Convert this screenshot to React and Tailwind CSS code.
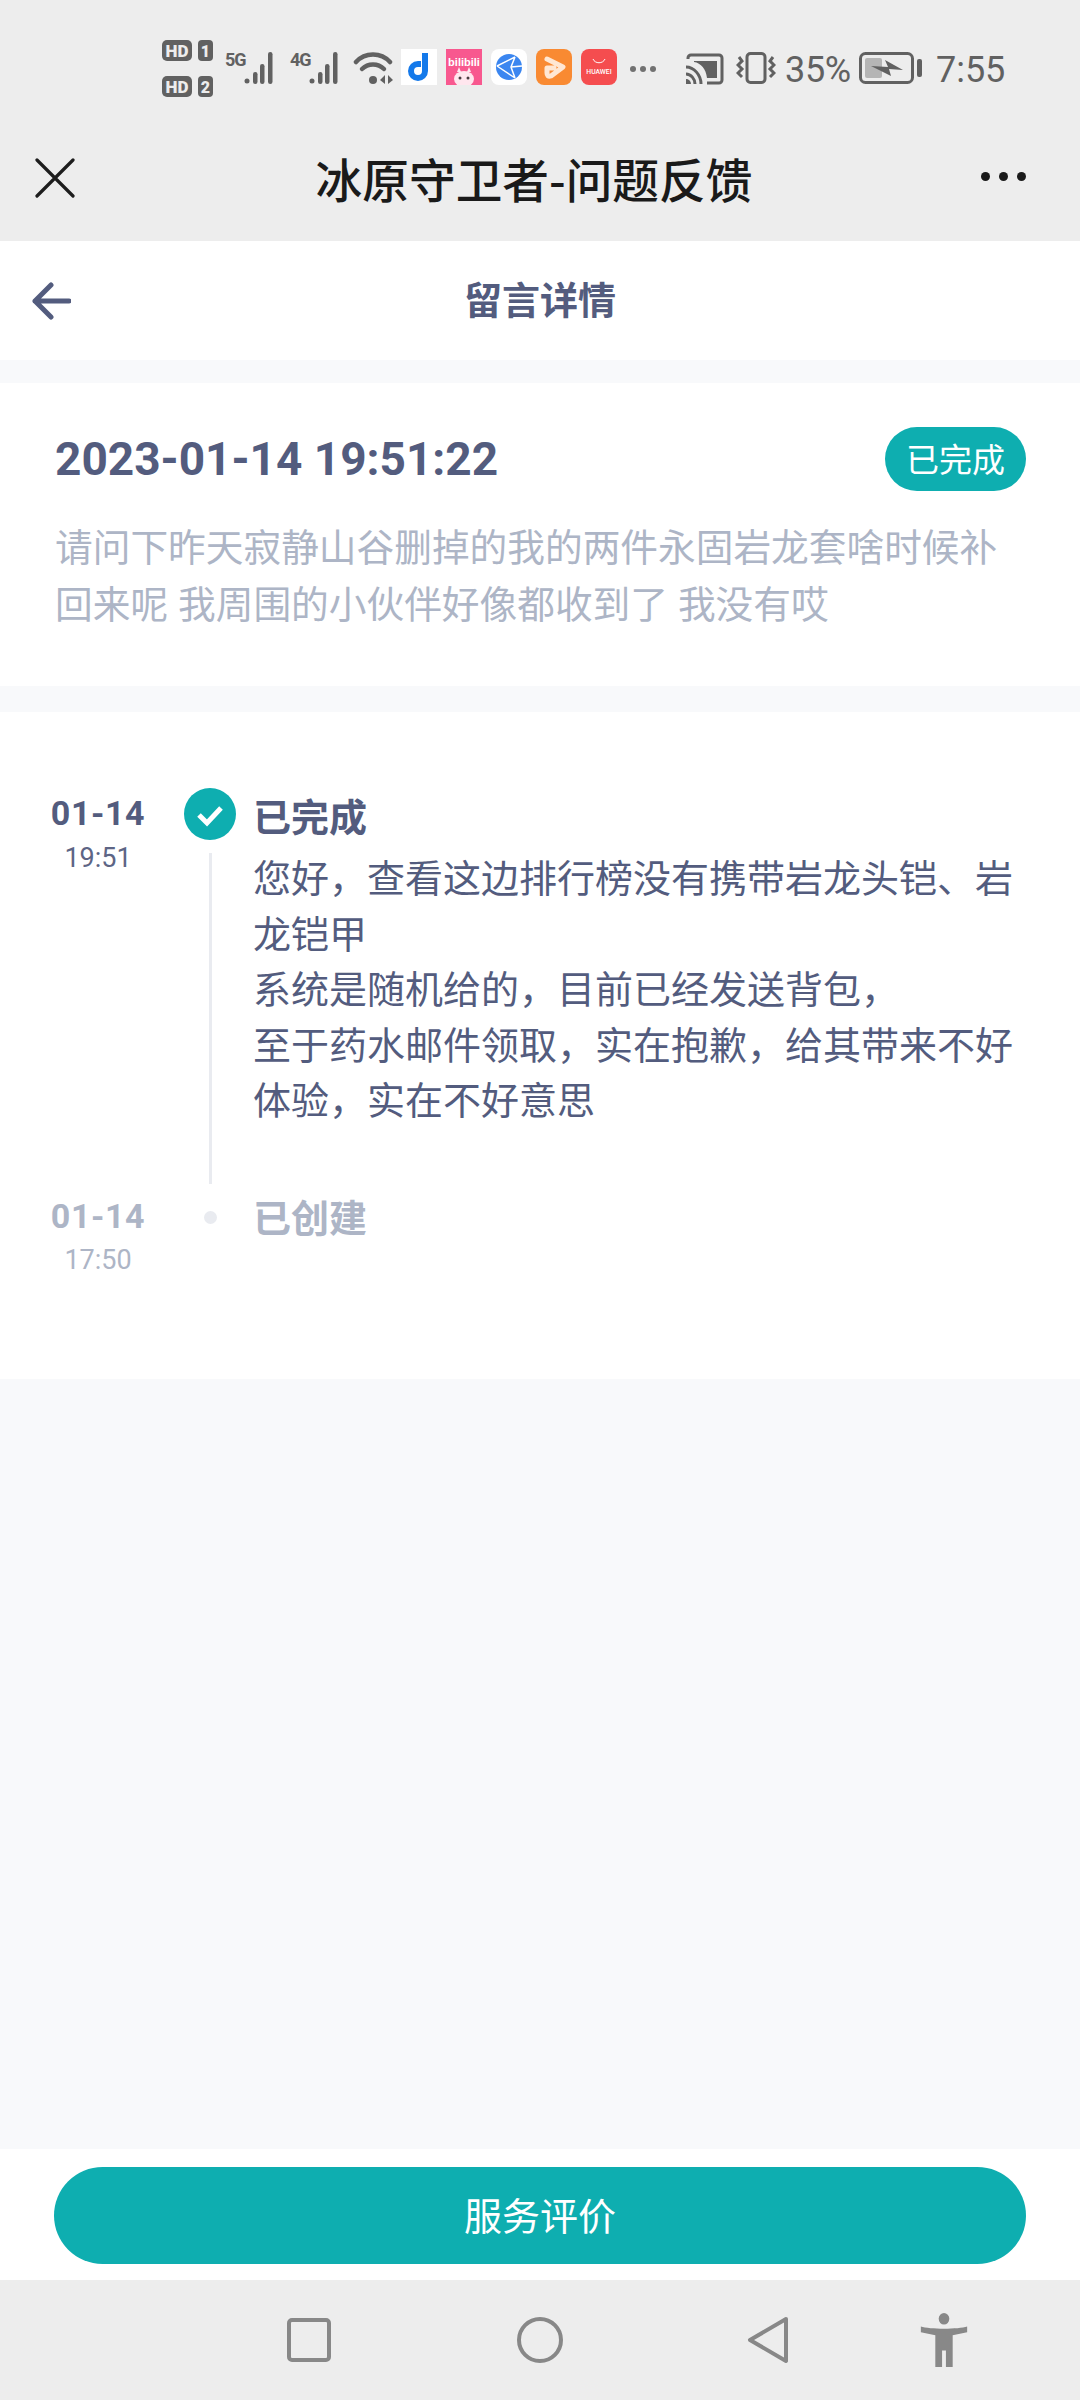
import React from 'react';

const cjk = "font-['Noto_Sans_CJK_SC','Noto_Sans',sans-serif]";
const num = "font-['Roboto','Noto_Sans_CJK_SC',sans-serif]";

const SignalBars = ({ label }) => (
  <div className="flex items-start shrink-0">
    <span className="w-[18px] font-['Roboto',sans-serif] text-[18px] leading-[17px] font-bold tracking-[-1.2px] text-[#616161]">{label}</span>
    <svg width={35} height={36} viewBox="18 0 35 36" className="shrink-0">
      <circle cx="22" cy="30" r="2.5" fill="#616161" />
      <rect x="28" y="21" width="4.5" height="12" rx="2.2" fill="#616161" />
      <rect x="35" y="13" width="4.5" height="20" rx="2.2" fill="#616161" />
      <rect x="43" y="1" width="4.5" height="32" rx="2.2" fill="#616161" />
    </svg>
  </div>
);

const HdRow = ({ num }) => (
  <svg width={52} height={22} viewBox="0 0 52 22" className="block">
    <rect x="0" y="0" width="30" height="21" rx="5" fill="#616161" />
    <text x="15" y="16.5" textAnchor="middle" fontFamily="Roboto" fontWeight="900" fontSize="17" fill="#ededed">HD</text>
    <rect x="36" y="0" width="15" height="21" rx="4" fill="#616161" />
    <text x="43.5" y="16.5" textAnchor="middle" fontFamily="Roboto" fontWeight="900" fontSize="16" fill="#ededed">{num}</text>
  </svg>
);

const StatusBar = () => (
  <div className="h-[92px] flex items-start pl-[162px] pt-[40px]">
    <div className="w-[52px] flex flex-col gap-[14px] shrink-0">
      <HdRow num="1" />
      <HdRow num="2" />
    </div>
    <div className="ml-[11px] mt-[11px] flex items-start gap-[12px]">
      <SignalBars label="5G" />
      <SignalBars label="4G" />
      <svg width={41} height={34} viewBox="0 0 41 34" className="-ml-[2px] shrink-0">
        <g fill="none" stroke="#616161" strokeWidth="4.5" strokeLinecap="round">
          <path d="M3 11 C12 1 28 1 37 11" />
          <path d="M9 18 C15 12 25 12 31 18" />
        </g>
        <circle cx="20" cy="29" r="4" fill="#616161" />
        <path d="M32 24 L32 33 L27 29 Z M35 24 L35 33 L40 29 Z" fill="#616161" />
      </svg>
      <div className="flex -ml-[5px] -mt-[2px] gap-[9px]">
        <svg width={36} height={36} viewBox="0 0 36 36" className="shrink-0">
          <rect width="36" height="36" fill="#ffffff" />
          <path d="M21 4 h6 v18 a10 10 0 1 1 -10 -10 h3 v6 h-3 a4 4 0 1 0 4 4 Z" fill="#1479ea" />
        </svg>
        <svg width={36} height={36} viewBox="0 0 36 36" className="shrink-0">
          <rect width="36" height="36" fill="#f8588f" />
          <text x="18" y="17" textAnchor="middle" fontFamily="Liberation Sans" fontWeight="700" fontSize="11" fill="#ffffff">bilibili</text>
          <ellipse cx="18" cy="30" rx="10" ry="8" fill="#ffe6ee" />
          <circle cx="14" cy="29" r="1.5" fill="#4a3b40" />
          <circle cx="22" cy="29" r="1.5" fill="#4a3b40" />
          <path d="M11 23 L13 18 L15 23 M21 23 L23 18 L25 23" fill="#ffe6ee" />
        </svg>
        <svg width={36} height={36} viewBox="0 0 36 36" className="shrink-0">
          <rect width="36" height="36" rx="8" fill="#ffffff" />
          <circle cx="18" cy="18" r="13" fill="#3b86f0" />
          <path d="M6 17 L24 8 M6 17 L24 29 M24 8 L20 18 L24 29 M20 18 L31 17" stroke="#ffffff" strokeWidth="1.5" fill="none" />
        </svg>
        <svg width={36} height={36} viewBox="0 0 36 36" className="shrink-0">
          <rect width="36" height="36" rx="8" fill="#f98a32" />
          <path d="M11 10 L27 18 L15 27 C12 28 11 26 11 24 L11 19 L18 19" stroke="#ffe7d3" strokeWidth="5" strokeLinejoin="round" strokeLinecap="round" fill="none" />
        </svg>
        <svg width={36} height={36} viewBox="0 0 36 36" className="shrink-0 -mr-[1px]">
          <rect width="36" height="36" rx="8" fill="#f54d4f" />
          <path d="M12 10 C14 15 22 15 24 10" stroke="#ffffff" strokeWidth="1" fill="none" />
          <text x="18" y="25" textAnchor="middle" fontFamily="Roboto" fontWeight="500" fontSize="6.8" fill="#ffffff">HUAWEI</text>
        </svg>
      </div>
      <div className="flex gap-[4px] mt-[15px] ml-[2px] shrink-0">
        <span className="w-[6px] h-[6px] rounded-full bg-[#717171]" />
        <span className="w-[6px] h-[6px] rounded-full bg-[#717171]" />
        <span className="w-[6px] h-[6px] rounded-full bg-[#717171]" />
      </div>
      <svg width={38} height={32} viewBox="0 0 38 32" className="ml-[18px] mt-[2px] shrink-0">
        <path d="M2 6 V5 a3 3 0 0 1 3 -3 H33 a3 3 0 0 1 3 3 V27 a3 3 0 0 1 -3 3 H21" fill="none" stroke="#616161" strokeWidth="3" />
        <path d="M8 8 H31 V25 H21 C20 16 15 10 8 9 Z" fill="#616161" />
        <path d="M0 14 C8 14 15 22 15 31 M0 21 C5 21 9 26 9 31" fill="none" stroke="#616161" strokeWidth="3" />
        <path d="M0 26 A5 5 0 0 1 5 31 H0 Z" fill="#616161" />
      </svg>
    </div>
    <div className="flex items-start ml-[12px] mt-[12px]">
      <svg width={40} height={32} viewBox="0 0 40 32" className="shrink-0">
        <rect x="11" y="1.5" width="18" height="29" rx="3.5" fill="none" stroke="#616161" strokeWidth="3" />
        <path d="M3 5 L6 9 L2 13 L6 17 L2 21 L6 25" fill="none" stroke="#616161" strokeWidth="3" />
        <path d="M37 5 L34 9 L38 13 L34 17 L38 21 L34 25" fill="none" stroke="#616161" strokeWidth="3" />
      </svg>
      <span className="ml-[9px] -mt-[7px] font-['Roboto',sans-serif] text-[36px] leading-[50px] text-[#616161] tracking-[-0.3px]">35%</span>
      <svg width={63} height={32} viewBox="0 0 63 32" className="ml-[8px] shrink-0">
        <rect x="1.5" y="1.5" width="52" height="29" rx="5" fill="none" stroke="#616161" strokeWidth="3" />
        <rect x="6" y="6" width="17" height="20" rx="2" fill="#b5b5b5" />
        <path d="M12 14 L29 15 L26 8 L44 18 L30 17 L32 24 Z" fill="#616161" />
        <rect x="58" y="7" width="5" height="18" rx="2" fill="#616161" />
      </svg>
      <span className="ml-[14px] -mt-[7px] font-['Roboto',sans-serif] text-[36px] leading-[50px] text-[#616161]">7:55</span>
    </div>
  </div>
);

const TitleBar = () => (
  <div className="h-[149px] relative flex items-start justify-between pl-[35px] pr-[50px] pt-[65px]">
    <svg width={40} height={40} viewBox="0 0 40 40" className="mt-[1px]">
      <path d="M2 2 L38 38 M38 2 L2 38" stroke="#1d1d1d" strokeWidth="3.2" strokeLinecap="round" />
    </svg>
    <h1 className={`${cjk} absolute left-0 right-[12px] top-[56px] text-center text-[46.7px] leading-[60px] font-medium text-[#1a1a1a]`}>冰原守卫者-问题反馈</h1>
    <div className="flex gap-[9px] mt-[15px] mr-[4px]">
      <span className="w-[9px] h-[9px] rounded-full bg-[#1a1a1a]" />
      <span className="w-[9px] h-[9px] rounded-full bg-[#1a1a1a]" />
      <span className="w-[9px] h-[9px] rounded-full bg-[#1a1a1a]" />
    </div>
  </div>
);

const Timeline = () => (
  <section className="bg-white mt-[26px] h-[667px] pt-[76px] pl-[51px]">
    <div className="flex h-[407px]">
      <div className={`${num} w-[96px] shrink-0 text-center -ml-[1px] mr-[1px]`}>
        <p className="text-[34px] leading-[44px] font-bold tracking-[0.6px] text-[#535c7e] mt-[3px]">01-14</p>
        <p className="text-[27px] leading-[36px] text-[#5d6585] mt-[5px]">19:51</p>
      </div>
      <div className="w-[52px] ml-[37px] shrink-0 flex flex-col items-center">
        <svg width={52} height={52} viewBox="0 0 52 52" className="shrink-0">
          <circle cx="26" cy="26" r="26" fill="#0eaeb0" />
          <path d="M15 27 L23 35 L37 20" fill="none" stroke="#ffffff" strokeWidth="5" />
        </svg>
        <div className="w-[3px] mt-[13px] h-[331px] bg-[#e9ebf0]" />
      </div>
      <div className={`${cjk} ml-[17px] w-[770px]`}>
        <h3 className="text-[38px] leading-[50px] font-bold text-[#535c7e] mt-[2px]">已完成</h3>
        <p className="text-[38px] leading-[55.5px] text-[#535c7e] mt-[8px]">
          您好，查看这边排行榜没有携带岩龙头铠、岩<br />
          龙铠甲<br />
          系统是随机给的，目前已经发送背包，<br />
          至于药水邮件领取，实在抱歉，给其带来不好<br />
          体验，实在不好意思
        </p>
      </div>
    </div>
    <div className="flex">
      <div className={`${num} w-[96px] shrink-0 text-center -ml-[1px] mr-[1px]`}>
        <p className="text-[34px] leading-[44px] font-bold tracking-[0.6px] text-[#adb5c6] -mt-[1px]">01-14</p>
        <p className="text-[27px] leading-[36px] text-[#adb5c6] mt-[4px]">17:50</p>
      </div>
      <div className="w-[52px] ml-[37px] shrink-0 flex justify-center pt-[16px]">
        <span className="w-[13px] h-[13px] rounded-full bg-[#e9ebf0]" />
      </div>
      <h3 className={`${cjk} ml-[17px] -mt-[4px] text-[38px] leading-[50px] font-bold text-[#adb5c6]`}>已创建</h3>
    </div>
  </section>
);

const NavBar = () => (
  <nav className="h-[120px] bg-[#ededed] flex items-start pl-[287px] pt-[36px]">
    <svg width={44} height={44} viewBox="0 0 44 44" className="shrink-0 mt-[2px]">
      <rect x="2" y="2" width="40" height="40" rx="3" fill="none" stroke="#888888" strokeWidth="4" />
    </svg>
    <svg width={46} height={46} viewBox="0 0 46 46" className="shrink-0 ml-[186px] mt-[1px]">
      <circle cx="23" cy="23" r="21" fill="none" stroke="#888888" strokeWidth="4" />
    </svg>
    <svg width={42} height={48} viewBox="0 0 42 48" className="shrink-0 ml-[184px]">
      <path d="M39 3 L3 24 L39 45 Z" fill="none" stroke="#888888" strokeWidth="4" strokeLinejoin="round" />
    </svg>
    <svg width={50} height={54} viewBox="0 0 50 56" className="shrink-0 ml-[130px] -mt-[3px]">
      <ellipse cx="25" cy="6" rx="5.5" ry="6" fill="#888888" />
      <path d="M1 14 C10 17 40 17 49 14 L49 20 L34 23 L34 56 L27 56 L27 39 L23 39 L23 56 L16 56 L16 23 L1 20 Z" fill="#888888" />
    </svg>
  </nav>
);

const App = () => {
  return (
    <div className="w-[1080px] h-[2400px] flex flex-col bg-[#f8f9fb] overflow-hidden">
      <header className="bg-[#ededed]">
        <StatusBar />
        <TitleBar />
      </header>

      <div className="h-[119px] bg-white relative flex items-center justify-center">
        <svg width={40} height={38} viewBox="0 0 40 38" className="absolute left-[31px] top-[41px]">
          <path d="M20 3 L4 19 L20 35 M4 19 H38" fill="none" stroke="#535c7e" strokeWidth="5" strokeLinecap="round" strokeLinejoin="round" />
        </svg>
        <h2 className={`${cjk} text-[38px] leading-[50px] font-bold text-[#535c7e] -mt-[6px]`}>留言详情</h2>
      </div>

      <section className="bg-white mt-[23px] h-[303px] pt-[44px] pl-[55px] pr-[54px]">
        <div className="flex items-center justify-between h-[64px]">
          <span className={`${num} text-[46px] leading-[56px] font-bold text-[#535c7e]`}>2023-01-14 19:51:22</span>
          <span className={`${cjk} w-[141px] h-[64px] rounded-full bg-[#0eaeb0] text-white text-[33px] flex items-center justify-center`}>已完成</span>
        </div>
        <p className={`${cjk} text-[37.7px] leading-[57px] text-[#adb5c6] mt-[25px] [word-spacing:1.5px]`}>
          请问下昨天寂静山谷删掉的我的两件永固岩龙套啥时候补<br />
          回来呢 我周围的小伙伴好像都收到了 我没有哎
        </p>
      </section>

      <Timeline />

      <div className="flex-1" />

      <div className="h-[131px] bg-white pt-[18px] px-[54px]">
        <button className={`${cjk} w-full h-[97px] rounded-full bg-[#0eaeb0] text-white text-[38px] pb-[5px]`}>服务评价</button>
      </div>

      <NavBar />
    </div>
  );
};

export default App;
